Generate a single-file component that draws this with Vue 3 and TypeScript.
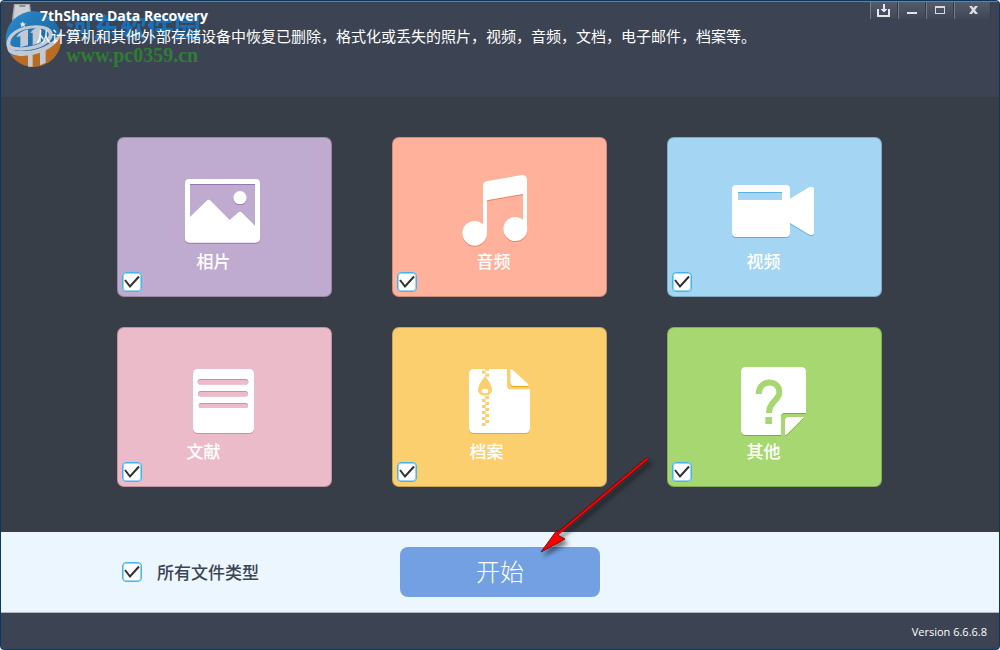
<script setup lang="ts">
import { computed, reactive } from 'vue'

interface FileKind {
  id: string
  label: string
  checked: boolean
}

const kinds = reactive<FileKind[]>([
  { id: 'photo', label: '相片', checked: true },
  { id: 'audio', label: '音频', checked: true },
  { id: 'video', label: '视频', checked: true },
  { id: 'document', label: '文献', checked: true },
  { id: 'archive', label: '档案', checked: true },
  { id: 'other', label: '其他', checked: true },
])

const allChecked = computed({
  get: () => kinds.every((k) => k.checked),
  set: (value: boolean) => kinds.forEach((k) => (k.checked = value)),
})

// Zipper teeth alternate between the left and right column.
const teeth = [
  { x: 301, y: 147, h: 5 },
  { x: 291, y: 152, h: 9 },
  { x: 301, y: 161, h: 9 },
  ...Array.from({ length: 10 }, (_, i) => ({ x: i % 2 ? 291 : 301, y: 228 + i * 9, h: 9 })),
]
</script>

<template>
  <div class="window">
    <header class="header">
      <div class="heading">
        <h1>7thShare Data Recovery</h1>
        <p>从计算机和其他外部存储设备中恢复已删除，格式化或丢失的照片，视频，音频，文档，电子邮件，档案等。</p>
      </div>
      <div class="controls">
        <button type="button" aria-label="Download">
          <svg width="14" height="14" viewBox="0 0 14 14" shape-rendering="crispEdges">
            <path d="M1 6v7h11V6" fill="none" stroke="#e4e6ea" stroke-width="2" />
            <path d="M6 1h2v5h2v1H9v1H8v1H6V8H5V7H4V6h2z" fill="#e4e6ea" />
          </svg>
        </button>
        <button type="button" aria-label="Minimize">
          <svg width="14" height="14" viewBox="0 0 14 14"><path d="M2 9h10v2H2z" fill="#e0e2e6" /></svg>
        </button>
        <button type="button" aria-label="Maximize">
          <svg width="14" height="14" viewBox="0 0 14 14" shape-rendering="crispEdges">
            <path d="M2 3h10v8H2zM3 5v5h8V5z" fill="#d6d9de" fill-rule="evenodd" />
          </svg>
        </button>
        <button type="button" class="close" aria-label="Close">
          <svg width="14" height="14" viewBox="0 0 14 14">
            <path d="M3 3h3l1.500 2L9 3h3L9 7l3 4H9L7.500 9 6 11H3l3-4z" fill="#dcdee2" />
          </svg>
        </button>
      </div>
      <svg class="app-icon" width="20" height="22" viewBox="0 0 60 66">
        <path d="M6 0h48l6 46v16H0V46z" fill="#a9adb3" />
        <path d="M10 3h40l5 40H5z" fill="#cdd0d4" />
        <rect x="22" y="4" width="18" height="4" fill="#6b717b" />
        <path d="M0 46h60v16H0z" fill="#8f959d" />
      </svg>
      <div class="watermark">
        <svg width="57" height="58" viewBox="15 33 171 174">
          <defs>
            <linearGradient id="globe" x1="0" y1="0" x2="1" y2="1">
              <stop offset="0" stop-color="#2c8ecf" />
              <stop offset="1" stop-color="#14558f" />
            </linearGradient>
          </defs>
          <circle cx="100" cy="117" r="83" fill="url(#globe)" />
          <path d="M31 163C60 177 130 165 183 108A83 83 0 0 1 31 163Z" fill="#b96c24" />
          <path d="M20 138C16 108 45 84 85 78 128 71 160 82 158 106 155 135 105 152 64 152 42 152 23 149 20 138ZM31 132C32 142 57 143 76 141 116 137 147 119 146 102 144 85 109 81 78 88 49 95 29 114 31 132Z" fill="#c3c9d3" fill-rule="evenodd" />
          <path d="M20 138C35 160 99 157 137 137 161 124 176 108 181 93 186 113 168 135 138 151 96 172 39 175 24 153Z" fill="#c3c9d3" />
          <path d="M49 111Q58 94 84 88V136L61 142V109ZM91 99Q101 82 123 82V127L98 136V98Z" fill="#c3c9d3" />
          <path d="M84 158h14v42H84zM120 151l17-9v46l-17 8z" fill="#c3c9d3" />
          <path d="m68 64 3 6 7 1-5 4 2 7-7-4-6 4 2-7-5-4 6-1Z" fill="#e0e7ee" />
        </svg>
        <div class="watermark-text">
          <strong>河东软件园</strong>
          <span>www.pc0359.cn</span>
        </div>
      </div>
    </header>

    <main class="tiles">
      <label v-for="kind in kinds" :key="kind.id" class="tile" :class="kind.id">
        <svg class="picture" width="101" height="80" viewBox="192 111 303 240">
          <template v-if="kind.id === 'photo'">
            <path fill-rule="evenodd" d="M238 147H437Q450 147 450 160V325Q450 338 437 338H238Q225 338 225 325V160Q225 147 238 147ZM240 162V261L290 212Q296 206 302 212L359 270 384 248Q390 243 396 248L435 287V162Z" />
            <circle cx="390" cy="203" r="20" />
          </template>
          <template v-else-if="kind.id === 'audio'">
            <path fill-rule="evenodd" d="M294 310V167Q294 157 304 154L410 135Q426 134 426 149V297H414V192L306 211V310Z" />
            <circle cx="269" cy="310" r="37" />
            <circle cx="391" cy="297" r="36" />
          </template>
          <template v-else-if="kind.id === 'video'">
            <path fill-rule="evenodd" d="M228 165H378Q390 165 390 177V206L447 172Q462 167 462 179V307Q462 319 448 314L390 279V309Q390 321 378 321H228Q216 321 216 309V177Q216 165 228 165ZM234 186V210H366V186Z" />
          </template>
          <template v-else-if="kind.id === 'document'">
            <rect x="249" y="147" width="183" height="192" rx="14" />
            <g class="edge">
              <rect x="263" y="177" width="152" height="16" rx="8" />
              <rect x="264" y="213" width="150" height="16" rx="8" />
              <rect x="266" y="249" width="148" height="15" rx="7" />
            </g>
            <g class="cut">
              <rect x="263" y="180" width="152" height="14" rx="7" />
              <rect x="264" y="216" width="150" height="14" rx="7" />
              <rect x="266" y="252" width="148" height="12" rx="6" />
            </g>
          </template>
          <template v-else-if="kind.id === 'archive'">
            <path d="M267 147H366V197Q366 208 377 208H435V324Q435 339 420 339H267Q252 339 252 324V162Q252 147 267 147Z" />
            <path d="M376 147Q381 147 387 153L430 193V198H387Q376 198 376 187Z" />
            <g class="cut">
              <rect v-for="t in teeth" :key="t.y" :x="t.x" :y="t.y" width="11" :height="t.h" />
              <path d="M300 168C308 178 321 197 321 210C321 220 312 227 300 227S279 220 279 210C279 197 292 178 300 168Z" />
            </g>
            <ellipse cx="300" cy="213" rx="10" ry="7" />
          </template>
          <template v-else>
            <path d="M258 141H423Q438 141 438 156V279H374Q363 279 363 290V345H258Q243 345 243 330V156Q243 141 258 141Z" />
            <path d="M375 302Q375 291 386 291H433L383 341Q379 345 375 345Z" />
            <path class="question" d="M296 222C296 177 358 177 358 216C358 242 327 243 327 279" />
            <rect class="cut" x="316" y="291" width="20" height="21" />
          </template>
        </svg>
        <span class="name">{{ kind.label }}</span>
        <span class="check">
          <input v-model="kind.checked" type="checkbox" />
          <svg width="20" height="20" viewBox="0 0 20 20"><path d="M3 8 8 14.500 17 4.500" /></svg>
        </span>
      </label>
    </main>

    <section class="actions">
      <label class="all">
        <span class="check">
          <input v-model="allChecked" type="checkbox" />
          <svg width="20" height="20" viewBox="0 0 20 20"><path d="M3 8 8 14.500 17 4.500" /></svg>
        </span>
        所有文件类型
      </label>
      <div class="start">
        <button type="button">开始</button>
        <svg class="arrow" width="120" height="104" viewBox="0 0 120 104">
          <path d="M110 6 19 82" stroke="#5a0a0c" stroke-width="3" stroke-linecap="round" />
          <path d="M4 99 20 77 22 83 28 86Z" fill="#f00" stroke="#6d1012" />
          <path d="M110 6 17 84" stroke="#f00" stroke-width="2" stroke-linecap="round" />
        </svg>
      </div>
    </section>

    <footer class="footer">Version 6.6.6.8</footer>
  </div>
</template>

<style>
body {
  margin: 0;
  background: #fff;
}
</style>

<style scoped>
.window {
  position: relative;
  display: flex;
  flex-direction: column;
  box-sizing: border-box;
  min-height: 100vh;
  overflow: hidden;
  border: 1px solid #093863;
  border-radius: 4px;
  background: #3c4454;
  color: #fff;
  font-family: "Open Sans", "Noto Sans CJK SC", sans-serif;
}

.header {
  position: relative;
  display: flex;
  justify-content: space-between;
  box-sizing: border-box;
  height: 96px;
  border-top: 1px solid #747c88;
}

.heading {
  position: relative;
  z-index: 1;
  padding: 4px 0 0 35px;
}

h1 {
  margin: 0;
  padding-left: 4px;
  font-size: 14px;
  font-weight: 700;
  line-height: 20px;
}

p {
  margin: 0;
  font-family: "Noto Sans CJK SC", sans-serif;
  font-size: 15px;
  font-weight: 400;
  line-height: 20px;
  white-space: nowrap;
}

.controls {
  display: flex;
  margin-right: 8px;
}

.controls button {
  display: flex;
  align-items: center;
  justify-content: center;
  width: 28px;
  height: 17px;
  padding: 0 1px 1px 0;
  border: 0;
  border-left: 1px solid #747b89;
  background: linear-gradient(#545c6c, #3f4757);
  box-shadow: inset -1px 0 #343c4a;
}

.controls .close {
  width: 37px;
}

.app-icon {
  position: absolute;
  top: 2px;
  left: 11px;
}

.watermark {
  position: absolute;
  top: 9px;
  left: 4px;
  display: flex;
  gap: 4px;
  pointer-events: none;
}

.watermark-text {
  display: flex;
  flex-direction: column;
  padding-top: 2px;
}

.watermark strong {
  color: #1b6fb5;
  font-family: "Noto Sans CJK SC", sans-serif;
  font-size: 27px;
  font-weight: 700;
  line-height: 28px;
}

.watermark span {
  color: #2f7d33;
  font-family: "Liberation Serif", serif;
  font-size: 20px;
  font-weight: 700;
  line-height: 28px;
}

.tiles {
  flex: 1;
  display: grid;
  grid-template-columns: repeat(3, 1fr);
  align-content: start;
  gap: 30px 60px;
  padding: 40px 117px 45px 116px;
  background: #373e47;
}

.tile {
  position: relative;
  display: flex;
  flex-direction: column;
  align-items: center;
  box-sizing: border-box;
  height: 160px;
  padding-top: 29px;
  border: 1px solid rgb(0 0 0 / 20%);
  border-radius: 7px;
  background: var(--tone);
}

.photo { --tone: #bfaad0; --shade: #9478b0; --name-width: 56px; }
.audio { --tone: #ffb19b; --shade: #f07c60; --name-width: 46px; }
.video { --tone: #a4d5f3; --shade: #5bb0df; --name-width: 56px; }
.document { --tone: #ecbbca; --shade: #d38ba0; --name-width: 76px; }
.archive { --tone: #fbce6e; --shade: #eba624; --name-width: 60px; }
.other { --tone: #a7d771; --shade: #74b234; --name-width: 56px; }

.picture {
  fill: #fff;
  filter: drop-shadow(0 1px 0 var(--shade));
}

.picture .cut {
  fill: var(--tone);
}

.picture .edge {
  fill: var(--shade);
}

.picture .question {
  fill: none;
  stroke: var(--tone);
  stroke-width: 18;
}

.name {
  width: var(--name-width);
  margin-top: 1px;
  font-family: "Noto Sans CJK SC", sans-serif;
  font-size: 17px;
  font-weight: 500;
  line-height: 26px;
  white-space: nowrap;
}

.check {
  position: relative;
  display: block;
  width: 20px;
  height: 20px;
}

.tile .check {
  position: absolute;
  bottom: 4px;
  left: 4px;
}

.check input {
  display: block;
  box-sizing: border-box;
  width: 20px;
  height: 20px;
  margin: 0;
  appearance: none;
  border: 1px solid #45b4ee;
  border-radius: 4px;
  background: #fff;
  box-shadow: inset 0 0 0 1px #9bd8f8;
}

.check svg {
  position: absolute;
  inset: 0;
  fill: none;
  stroke: #303030;
  stroke-width: 2;
  pointer-events: none;
}

.check input:not(:checked) + svg {
  display: none;
}

.actions {
  display: grid;
  grid-template-columns: 1fr auto 1fr;
  align-items: center;
  height: 80px;
  border-bottom: 1px solid #aeb6bf;
  background: #ebf6ff;
}

.all {
  display: flex;
  align-items: center;
  gap: 15px;
  padding-left: 121px;
  color: #3c4454;
  font-family: "Noto Sans CJK SC", sans-serif;
  font-size: 17px;
  font-weight: 500;
  line-height: 24px;
}

.start {
  position: relative;
}

.start button {
  display: block;
  width: 200px;
  height: 50px;
  padding: 0 0 3px;
  border: 0;
  border-radius: 8px;
  background: #72a0e2;
  color: #fff;
  font-family: "Noto Sans CJK SC", sans-serif;
  font-size: 24px;
  font-weight: 300;
}

.arrow {
  position: absolute;
  bottom: 40px;
  left: 137px;
  filter: drop-shadow(3px 4px 2px rgb(0 0 0 / 50%));
  pointer-events: none;
}

.footer {
  padding: 11px 12px 9px;
  font-size: 11px;
  line-height: 16px;
  text-align: right;
}
</style>
